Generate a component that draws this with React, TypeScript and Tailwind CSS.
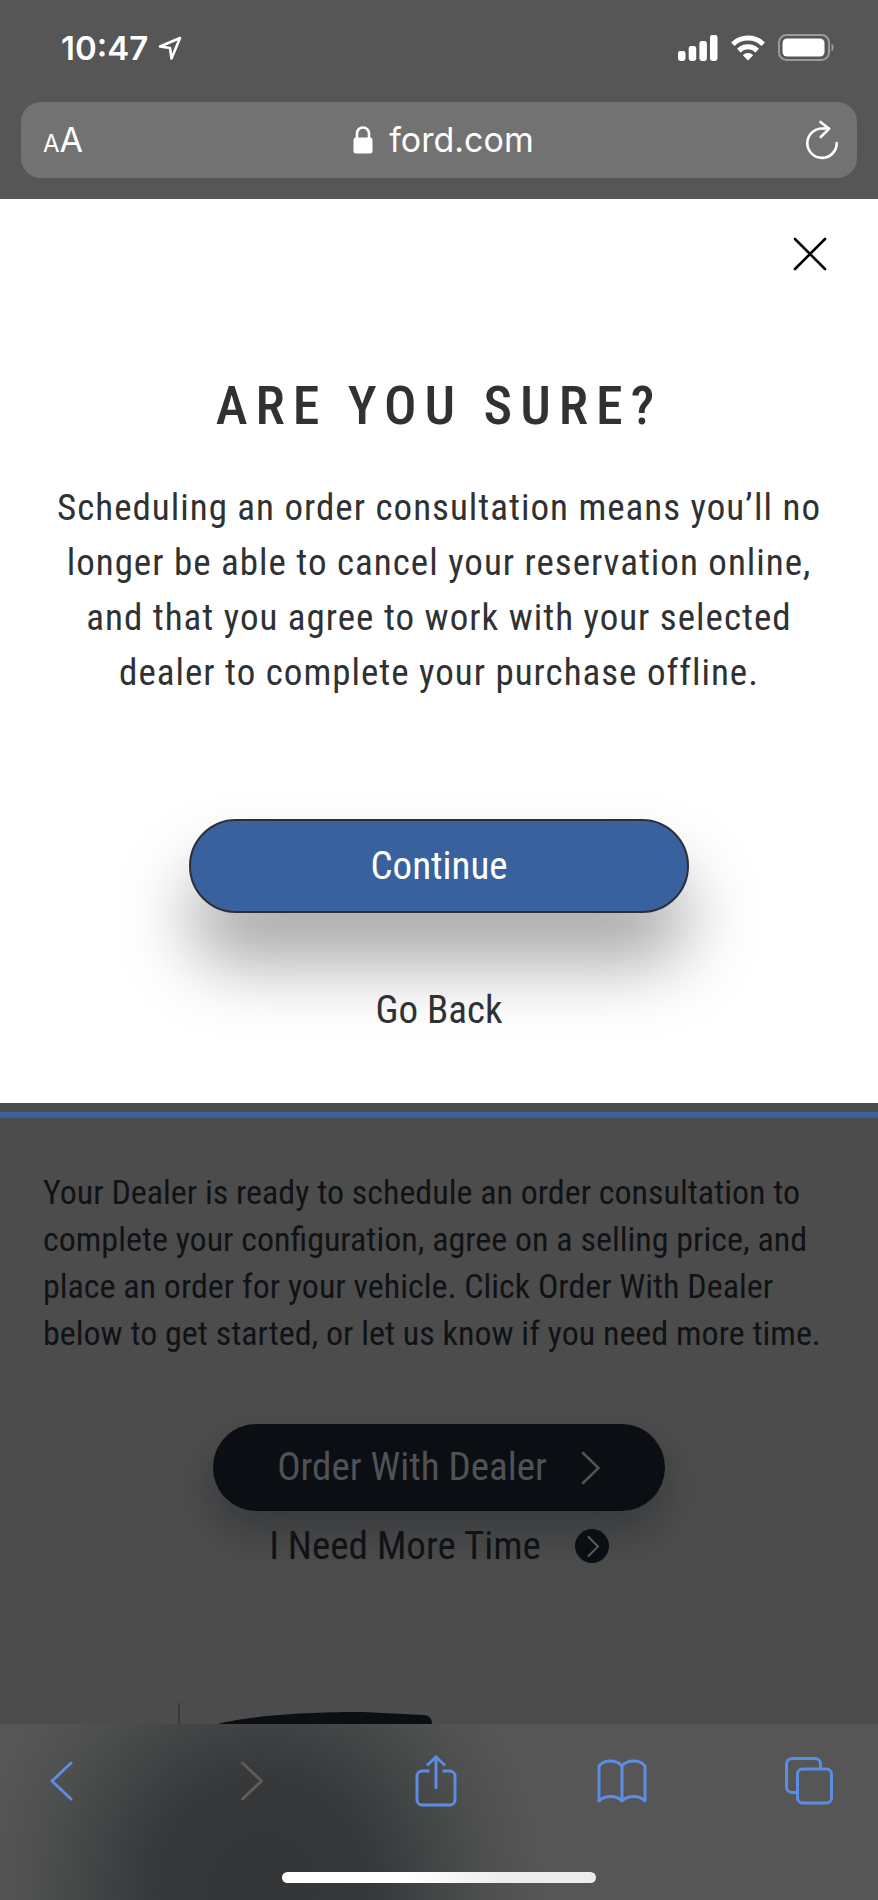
import React from 'react';

const StatusBar: React.FC = () => (
  <div className="flex h-[102px] items-center justify-between pb-[6px] pl-[61px] pr-[43px]">
    <div className="flex items-center gap-[10px]">
      <span className="text-[33px] font-semibold leading-[40px]">10:47</span>
      <svg width="24" height="24" viewBox="0 0 24 24" fill="none" stroke="currentColor" strokeWidth="2.6" strokeLinejoin="round">
        <path d="M22 2 2 10.5l10 1.5 1.5 10.5z" />
      </svg>
    </div>
    <div className="flex items-center gap-[13px]">
      {/* Signal */}
      <svg width="40" height="26" viewBox="0 0 40 26" fill="currentColor">
        <rect x="0" y="16" width="7.5" height="10" rx="2.4" />
        <rect x="10.7" y="11" width="7.5" height="15" rx="2.4" />
        <rect x="21.4" y="6" width="7.5" height="20" rx="2.4" />
        <rect x="32" y="0" width="7.5" height="26" rx="2.4" />
      </svg>
      {/* Wifi */}
      <svg width="34" height="26" viewBox="0 0 34 26" fill="none" stroke="currentColor" strokeWidth="5">
        <path d="M1.8 9.2a22 22 0 0 1 30.4 0" />
        <path d="M7.8 15.6a13.2 13.2 0 0 1 18.4 0" />
        <path d="M11.8 20.2a7.4 7.4 0 0 1 10.4 0L17 25.6z" fill="currentColor" stroke="none" />
      </svg>
      {/* Battery */}
      <svg width="57" height="28" viewBox="0 0 57 28" fill="none">
        <rect x="1" y="1" width="50" height="25" rx="7.5" stroke="#9b9b9b" strokeWidth="2" />
        <rect x="4.5" y="4.5" width="42" height="18" rx="4.5" fill="currentColor" />
        <path d="M53.5 9.5c2.8 1.3 2.8 6.7 0 8z" fill="#9b9b9b" />
      </svg>
    </div>
  </div>
);

const AddressBar: React.FC = () => (
  <div className="px-[21px] pb-[21px]">
    <div className="flex h-[76px] items-center justify-between rounded-[20px] bg-[#727272] pl-[22px] pr-[17px]">
      <button aria-label="Text size" className="flex w-[44px] items-baseline pt-1 leading-[40px]">
        <span className="text-[24px]">A</span>
        <span className="text-[34px]">A</span>
      </button>
      <a href="#" className="flex items-center gap-[16px] pr-1 text-[34px] leading-[40px]">
        <svg width="20" height="28" viewBox="0 0 20 28" fill="none">
          <path d="M4 13V7.5a6 6 0 0 1 12 0V13" stroke="currentColor" strokeWidth="2.6" />
          <rect x="0.5" y="11.5" width="19" height="16" rx="2.5" fill="currentColor" />
        </svg>
        ford.com
      </a>
      <button aria-label="Reload" className="flex w-[36px] justify-center">
        <svg width="34" height="40" viewBox="0 0 34 40" fill="none" stroke="currentColor" strokeWidth="2.6" strokeLinecap="round" strokeLinejoin="round">
          <path d="M31.7 23a14.7 14.7 0 1 1-14.7-14.5h7" />
          <path d="m15.5 2 8.500 6.800-8.200 8.200" />
        </svg>
      </button>
    </div>
  </div>
);

const ConfirmDialog: React.FC = () => (
  <section role="dialog" aria-labelledby="confirm-title" className="bg-white px-10 pb-[69px] pt-[38px] text-center text-[#2f3133]">
    <div className="flex justify-end pr-[11px]">
      <button aria-label="Close" className="text-black">
        <svg width="34" height="34" viewBox="0 0 34 34" fill="none" stroke="currentColor" strokeWidth="2.6" strokeLinecap="round">
          <path d="m2 2 30 30M32 2 2 32" />
        </svg>
      </button>
    </div>
    <h1 id="confirm-title" className="mt-[103px] text-[54px] font-medium leading-[64px] tracking-[8px]">
      ARE YOU SURE?
    </h1>
    <p className="mt-[42px] text-[37px] leading-[55px] tracking-[1px]">
      Scheduling an order consultation means you’ll no
      <br />
      longer be able to cancel your reservation online,
      <br />
      and that you agree to work with your selected
      <br />
      dealer to complete your purchase offline.
    </p>
    <div className="mt-[119px] flex flex-col items-center">
      <button className="h-[94px] w-[500px] rounded-full border-2 border-[#2b2f38] bg-[#38619e] text-[39px] text-white shadow-[0_50px_70px_rgba(0,0,0,0.35)]">
        Continue
      </button>
      <button className="relative mt-[73px] text-[39px] leading-[48px]">Go Back</button>
    </div>
  </section>
);

const DealerSection: React.FC = () => (
  <section className="pt-[9px] text-[#101216]">
    <div className="h-[6px] bg-[#3a62a0]" />
    <p className="mt-[51px] px-[43px] text-[34px] leading-[47px]">
      Your Dealer is ready to schedule an order consultation to
      <br />
      complete your configuration, agree on a selling price, and
      <br />
      place an order for your vehicle. Click Order With Dealer
      <br />
      below to get started, or let us know if you need more time.
    </p>
    <div className="mt-[67px] flex flex-col items-center">
      <button className="flex h-[87px] w-[452px] items-center justify-center gap-[34px] rounded-full bg-[#0b0f14] text-[39px] text-[#515254] shadow-[0_20px_40px_rgba(5,10,20,0.28)]">
        Order With Dealer
        <svg width="20" height="34" viewBox="0 0 20 34" fill="none" stroke="currentColor" strokeWidth="2.6" strokeLinecap="round">
          <path d="M2 2 17.5 17 2 32" />
        </svg>
      </button>
      <button className="relative mt-[11px] flex items-center gap-[34px] text-[39px] leading-[48px]">
        I Need More Time
        <svg width="34" height="34" viewBox="0 0 34 34" fill="none">
          <circle cx="17" cy="17" r="17" fill="#0b0f14" />
          <path d="m13.5 8 9.500 9.500-9.500 9.500" stroke="#5a5b5d" strokeWidth="2" strokeLinecap="round" />
        </svg>
      </button>
    </div>
    {/* Top edge of the vehicle card, cut off by the toolbar */}
    <svg className="ml-[178px] mt-[133px] block" width="256" height="21" viewBox="0 0 256 21" fill="none">
      <path d="M1 0v21" stroke="#333435" strokeWidth="1.5" />
      <path d="M40 21C75 11 150 8.5 185 9l60 3c7 0 9 4 9 9z" fill="#0b0f14" />
    </svg>
  </section>
);

const ToolbarButton: React.FC<{ label: string; children: React.ReactNode }> = ({ label, children }) => (
  <button aria-label={label} className="flex h-[54px] w-12 items-center justify-center">
    {children}
  </button>
);

const Toolbar: React.FC = () => (
  <nav className="bg-[#565656] bg-[radial-gradient(ellipse_280px_290px_at_262px_165px,#323436_0%,#36383a_40%,#424445_60%,#4e4f4f_80%,#565656_100%)] pb-[17px] pt-[30px] text-[#5b8de3]">
    <div className="flex items-center justify-between pl-[38px] pr-[45px]">
      <ToolbarButton label="Back">
        <svg width="24" height="42" viewBox="0 0 24 42" fill="none" stroke="currentColor" strokeWidth="3" strokeLinecap="round" strokeLinejoin="round">
          <path d="M21 3 2 21l19 18" />
        </svg>
      </ToolbarButton>
      <ToolbarButton label="Forward">
        <svg width="30" height="42" viewBox="0 0 30 42" fill="none" stroke="#5c5c5d" strokeWidth="3" strokeLinecap="round" strokeLinejoin="round">
          <path d="M8.5 3 27.5 21 8.5 39" />
        </svg>
      </ToolbarButton>
      <ToolbarButton label="Share">
        <svg width="42" height="52" viewBox="0 0 42 52" fill="none" stroke="currentColor" strokeWidth="3">
          <path d="M14.5 16H7a5 5 0 0 0-5 5v24a5 5 0 0 0 5 5h28a5 5 0 0 0 5-5V21a5 5 0 0 0-5-5h-7.5" />
          <path d="M21 34V2.5M12 10.5l9-8.500 9 8.500" />
        </svg>
      </ToolbarButton>
      <ToolbarButton label="Bookmarks">
        <svg className="shrink-0" width="50" height="44" viewBox="0 0 50 44" fill="none" stroke="currentColor" strokeWidth="3" strokeLinejoin="round">
          <path d="M25 7C22 3.5 18 2 13.5 2S4.500 3.500 2 7v35c3-3 7-4.500 11.500-4.500S22 39 25 42c3-3 7-4.500 11.500-4.500S45 39 48 42V7c-2.500-3.500-7-5-11.500-5S28 3.500 25 7zv35" />
        </svg>
      </ToolbarButton>
      <ToolbarButton label="Tabs">
        <svg width="48" height="48" viewBox="0 0 48 48" fill="none" stroke="currentColor" strokeWidth="3">
          <rect x="12.5" y="12" width="34" height="34" rx="5" />
          <path d="M12.5 35.5H7A5.5 5.5 0 0 1 1.5 30V7A5.5 5.5 0 0 1 7 1.5h23A5.5 5.5 0 0 1 35.5 7v5" />
        </svg>
      </ToolbarButton>
    </div>
    <div className="mx-auto mt-[64px] h-[11px] w-[314px] rounded-full bg-linear-to-r from-white from-40% to-[#ececec] to-70%" />
  </nav>
);

export default function App() {
  return (
    <div className="bg-[#4c4c4c]">
      <header className="bg-[#565656] font-[Inter,sans-serif] text-white">
        <StatusBar />
        <AddressBar />
      </header>
      <main className="font-['Roboto_Condensed','Liberation_Sans_Narrow',Roboto,sans-serif]">
        <ConfirmDialog />
        <DealerSection />
      </main>
      <Toolbar />
    </div>
  );
}
